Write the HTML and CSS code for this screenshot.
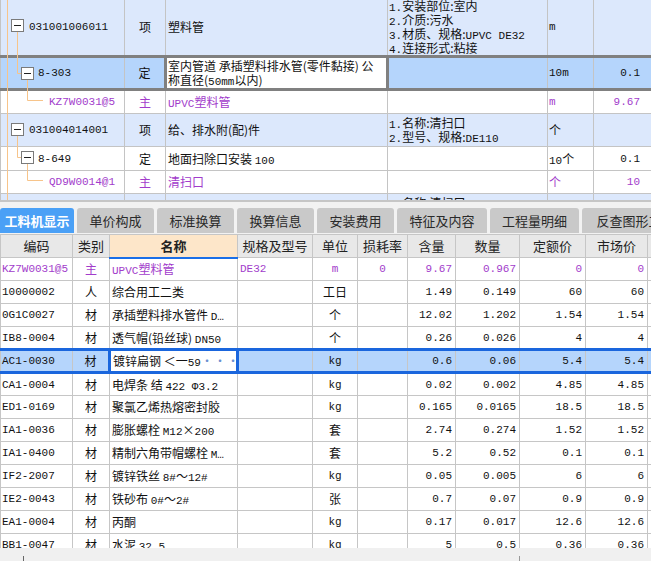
FILE: index.html
```html
<!DOCTYPE html>
<html>
<head>
<meta charset="utf-8">
<link rel="stylesheet" href="styles.css">
</head>
<body>
<div class="top">
  <table class="tt">
    <colgroup><col class="k1"><col class="k2"><col class="k3"><col class="k4"><col class="k5"><col class="k6"></colgroup>
    <tr class="h57 item">
      <td class="l1 a">031001006011</td>
      <td class="ty">项</td>
      <td class="nm">塑料管</td>
      <td class="ft"><span class="a">1.</span>安装部位:室内<br><span class="a">2.</span>介质:污水<br><span class="a">3.</span>材质、规格:<span class="a">UPVC DE32</span><br><span class="a">4.</span>连接形式:粘接</td>
      <td class="u a">m</td>
      <td class="v"></td>
    </tr>
    <tr class="h32 cur">
      <td class="l2 a">8-303</td>
      <td class="ty">定</td>
      <td class="nm ed">室内管道 承插塑料排水管(零件黏接) 公<br>称直径(<span class="a">50mm</span>以内)</td>
      <td class="ft"></td>
      <td class="u a">10m</td>
      <td class="v a">0.1</td>
    </tr>
    <tr class="h24 pu">
      <td class="l3 a">KZ7W0031@5</td>
      <td class="ty">主</td>
      <td class="nm"><span class="a">UPVC</span>塑料管</td>
      <td class="ft"></td>
      <td class="u a">m</td>
      <td class="v a">9.67</td>
    </tr>
    <tr class="h33 item">
      <td class="l1 a">031004014001</td>
      <td class="ty">项</td>
      <td class="nm">给、排水附(配)件</td>
      <td class="ft"><span class="a">1.</span>名称:清扫口<br><span class="a">2.</span>型号、规格:<span class="a">DE110</span></td>
      <td class="u">个</td>
      <td class="v"></td>
    </tr>
    <tr class="h24">
      <td class="l2 a">8-649</td>
      <td class="ty">定</td>
      <td class="nm">地面扫除口安装 <span class="a">100</span></td>
      <td class="ft"></td>
      <td class="u"><span class="a">10</span>个</td>
      <td class="v a">0.1</td>
    </tr>
    <tr class="h23 pu">
      <td class="l3 a">QD9W0014@1</td>
      <td class="ty">主</td>
      <td class="nm">清扫口</td>
      <td class="ft"></td>
      <td class="u">个</td>
      <td class="v a">10</td>
    </tr>
    <tr class="h33 item">
      <td class="l1 a">031004014002</td>
      <td class="ty">项</td>
      <td class="nm">给、排水附(配)件</td>
      <td class="ft"><span class="a">1.</span>名称:清扫口<br><span class="a">2.</span>型号、规格:<span class="a">DE75</span></td>
      <td class="u">个</td>
      <td class="v"></td>
    </tr>
  </table>
  <svg class="tree" width="50" height="200" viewBox="0 0 50 200">
    <g stroke="#f7c48a" stroke-width="1" fill="none">
      <line x1="7.5" y1="0" x2="7.5" y2="200"/>
      <polyline points="17.5,32 17.5,73.5 21,73.5"/>
      <polyline points="27.5,80 27.5,100.5 43,100.5"/>
      <polyline points="17.5,136 17.5,157.5 21,157.5"/>
      <polyline points="27.5,164 27.5,180.5 43,180.5"/>
    </g>
    <g stroke="#7a7a7a" fill="#fff">
      <rect x="11.5" y="19.5" width="12" height="12"/>
      <rect x="21.5" y="67.5" width="12" height="12"/>
      <rect x="11.5" y="123.5" width="12" height="12"/>
      <rect x="21.5" y="151.5" width="12" height="12"/>
    </g>
    <g stroke="#222" stroke-width="1">
      <line x1="14" y1="25.5" x2="21" y2="25.5"/>
      <line x1="24" y1="73.5" x2="31" y2="73.5"/>
      <line x1="14" y1="129.5" x2="21" y2="129.5"/>
      <line x1="24" y1="157.5" x2="31" y2="157.5"/>
    </g>
  </svg>
</div>
<div class="sep"></div>
<div class="bar">
  <div class="tab on t74">工料机显示</div>
  <div class="tab t77">单价构成</div>
  <div class="tab t77">标准换算</div>
  <div class="tab t77">换算信息</div>
  <div class="tab t77">安装费用</div>
  <div class="tab t90">特征及内容</div>
  <div class="tab t89">工程量明细</div>
  <div class="tab t120">反查图形工程量</div>
</div>
<div class="grid">
  <table class="bt">
    <colgroup><col class="b1"><col class="b2"><col class="b3"><col class="b4"><col class="b5"><col class="b6"><col class="b7"><col class="b8"><col class="b9"><col class="b10"><col class="b11"></colgroup>
    <tr>
      <th>编码</th><th>类别</th><th class="hn">名称</th><th>规格及型号</th><th>单位</th><th>损耗率</th><th>含量</th><th>数量</th><th>定额价</th><th>市场价</th><th></th>
    </tr>
    <tr class="pu">
      <td class="cd a">KZ7W0031@5</td><td class="c">主</td><td><span class="a">UPVC</span>塑料管</td><td class="a">DE32</td><td class="c a">m</td><td class="c a">0</td><td class="r a">9.67</td><td class="r a">0.967</td><td class="r a">0</td><td class="r a">0</td><td></td>
    </tr>
    <tr>
      <td class="cd a">10000002</td><td class="c">人</td><td>综合用工二类</td><td></td><td class="c">工日</td><td></td><td class="r a">1.49</td><td class="r a">0.149</td><td class="r a">60</td><td class="r a">60</td><td></td>
    </tr>
    <tr>
      <td class="cd a">0G1C0027</td><td class="c">材</td><td>承插塑料排水管件 <span class="a">D…</span></td><td></td><td class="c">个</td><td></td><td class="r a">12.02</td><td class="r a">1.202</td><td class="r a">1.54</td><td class="r a">1.54</td><td></td>
    </tr>
    <tr>
      <td class="cd a">IB8-0004</td><td class="c">材</td><td>透气帽(铅丝球) <span class="a">DN50</span></td><td></td><td class="c">个</td><td></td><td class="r a">0.26</td><td class="r a">0.026</td><td class="r a">4</td><td class="r a">4</td><td></td>
    </tr>
    <tr class="sel">
      <td class="cd a">AC1-0030</td><td class="c">材</td><td class="edit"><div class="ew"><span>镀锌扁钢 ＜一<span class="a">59</span></span><span class="dots">···</span></div></td><td></td><td class="c a">kg</td><td></td><td class="r a">0.6</td><td class="r a">0.06</td><td class="r a">5.4</td><td class="r a">5.4</td><td></td>
    </tr>
    <tr>
      <td class="cd a">CA1-0004</td><td class="c">材</td><td>电焊条 结 <span class="a">422 Φ3.2</span></td><td></td><td class="c a">kg</td><td></td><td class="r a">0.02</td><td class="r a">0.002</td><td class="r a">4.85</td><td class="r a">4.85</td><td></td>
    </tr>
    <tr>
      <td class="cd a">ED1-0169</td><td class="c">材</td><td>聚氯乙烯热熔密封胶</td><td></td><td class="c a">kg</td><td></td><td class="r a">0.165</td><td class="r a">0.0165</td><td class="r a">18.5</td><td class="r a">18.5</td><td></td>
    </tr>
    <tr>
      <td class="cd a">IA1-0036</td><td class="c">材</td><td>膨胀螺栓 <span class="a">M12</span>×<span class="a">200</span></td><td></td><td class="c">套</td><td></td><td class="r a">2.74</td><td class="r a">0.274</td><td class="r a">1.52</td><td class="r a">1.52</td><td></td>
    </tr>
    <tr>
      <td class="cd a">IA1-0400</td><td class="c">材</td><td>精制六角带帽螺栓 <span class="a">M…</span></td><td></td><td class="c">套</td><td></td><td class="r a">5.2</td><td class="r a">0.52</td><td class="r a">0.1</td><td class="r a">0.1</td><td></td>
    </tr>
    <tr>
      <td class="cd a">IF2-2007</td><td class="c">材</td><td>镀锌铁丝 <span class="a">8#</span>～<span class="a">12#</span></td><td></td><td class="c a">kg</td><td></td><td class="r a">0.05</td><td class="r a">0.005</td><td class="r a">6</td><td class="r a">6</td><td></td>
    </tr>
    <tr>
      <td class="cd a">IE2-0043</td><td class="c">材</td><td>铁砂布 <span class="a">0#</span>～<span class="a">2#</span></td><td></td><td class="c">张</td><td></td><td class="r a">0.7</td><td class="r a">0.07</td><td class="r a">0.9</td><td class="r a">0.9</td><td></td>
    </tr>
    <tr>
      <td class="cd a">EA1-0004</td><td class="c">材</td><td>丙酮</td><td></td><td class="c a">kg</td><td></td><td class="r a">0.17</td><td class="r a">0.017</td><td class="r a">12.6</td><td class="r a">12.6</td><td></td>
    </tr>
    <tr>
      <td class="cd a">BB1-0047</td><td class="c">材</td><td>水泥 <span class="a">32.5</span></td><td></td><td class="c a">kg</td><td></td><td class="r a">5</td><td class="r a">0.5</td><td class="r a">0.36</td><td class="r a">0.36</td><td></td>
    </tr>
  </table>
</div>
<div class="foot"><div class="f1"></div><div class="f2"></div><div class="f3"></div></div>
</body>
</html>
```
FILE: styles.css
```css
* { box-sizing: border-box; }
html, body { margin: 0; padding: 0; }
body {
  width: 651px;
  height: 561px;
  overflow: hidden;
  background: #f0f0f0;
  font-family: "Noto Sans CJK SC", "Liberation Sans", sans-serif;
  font-size: 12px;
  color: #111;
}
.a { font-family: "Liberation Mono", monospace; font-size: 11px; }
span.a { line-height: 10px; }

/* top tree grid */
.top { position: relative; height: 200px; overflow: hidden; background: #fff; }
.tt { table-layout: fixed; border-collapse: collapse; width: 651px; margin-top: -2px; }
.tt col.k1 { width: 124px; }
.tt col.k2 { width: 41px; }
.tt col.k3 { width: 222px; }
.tt col.k4 { width: 160px; }
.tt col.k5 { width: 46px; }
.tt col.k6 { width: 58px; }
.tt td {
  border: 1px solid #c4c4c4;
  padding: 0 2px;
  line-height: 14px;
  white-space: nowrap;
  overflow: hidden;
  vertical-align: middle;
}
.tt tr.h57 td { height: 57px; }
.tt tr.h32 td { height: 33px; }
.tt tr.h24 td { height: 24px; }
.tt tr.h23 td { height: 23px; }
.tt tr.h33 td { height: 33px; }
.tt tr.item td { background: #dce8fc; }
.tt td.l1 { padding-left: 28px; }
.tt td.l2 { padding-left: 37px; }
.tt td.l3 { padding-left: 48px; }
.tt td.ty { text-align: center; }
.tt td.nm { padding-left: 2px; }
.tt td.ft { padding-left: 1px; }
.tt td.u { padding-left: 1px; }
.tt td.v { text-align: right; padding-right: 11px; }
.tt tr.cur td { background: #b5d5fc; border-top: 3px solid #808080; border-bottom: 3px solid #808080; }
.tt tr.cur td.ed { background: #fff; border: 3px solid #808080; padding-left: 1px; }
.tt tr.pu td { color: #a23ccb; }
.tree { position: absolute; left: 0; top: 0; }

.sep { height: 2px; background: #c6c6c6; }

/* tabs */
.bar {
  display: flex;
  gap: 3px;
  height: 32px;
  padding-top: 6px;
  padding-bottom: 1px;
  overflow: hidden;
  background: #f2f2f2;
}
.tab {
  flex: none;
  height: 25px;
  background: #c9c9c9;
  border-radius: 3px 3px 0 0;
  font-size: 13px;
  line-height: 25px;
  text-align: center;
  color: #2a2a2a;
  white-space: nowrap;
  overflow: hidden;
}
.tab.on { background: #4aa0f6; color: #fff; font-weight: bold; }
.t74 { width: 74px; }
.t77 { width: 77px; }
.t89 { width: 89px; }
.t90 { width: 90px; }
.t120 { width: 120px; }

/* material grid */
.grid { height: 314px; overflow: hidden; background: #fff; }
.bt { table-layout: fixed; border-collapse: collapse; width: 651px; }
.bt col.b1 { width: 72px; }
.bt col.b2 { width: 37px; }
.bt col.b3 { width: 128px; }
.bt col.b4 { width: 75px; }
.bt col.b5 { width: 45px; }
.bt col.b6 { width: 50px; }
.bt col.b7 { width: 48px; }
.bt col.b8 { width: 64px; }
.bt col.b9 { width: 66px; }
.bt col.b10 { width: 62px; }
.bt col.b11 { width: 4px; }
.bt th, .bt td {
  border: 1px solid #c6c6c6;
  height: 23px;
  padding: 0 2px;
  white-space: nowrap;
  overflow: hidden;
  vertical-align: middle;
  line-height: 14px;
}
.bt th {
  background: #e8e8e8;
  font-weight: normal;
  font-size: 13px;
  color: #222;
  text-align: center;
}
.bt th.hn { background: #fde6c9; font-weight: bold; border-bottom: 2px solid #1a6fe8; }
.bt td.cd { padding-left: 1px; }
.bt td.c { text-align: center; }
.bt td.r { text-align: right; padding-right: 3px; }
.bt tr.pu td { color: #a23ccb; }
.bt tr.sel td { background: #b5d5fc; border-top: 3px solid #1a66dd; border-bottom: 3px solid #1a66dd; }
.bt tr.sel td.edit { background: #fff; border: 3px solid #1a66dd; padding-right: 3px; }
.ew { display: flex; justify-content: space-between; align-items: center; }
.dots { color: #6a8fd0; font-size: 12px; letter-spacing: 1px; }

.foot { height: 13px; display: flex; padding-top: 8px; background: #f0f0f0; }
.foot .f1 { width: 23px; }
.foot .f2 { width: 496px; border-left: 1px solid #666; }
.foot .f3 { flex: 1; border-left: 1px solid #999; }
```
